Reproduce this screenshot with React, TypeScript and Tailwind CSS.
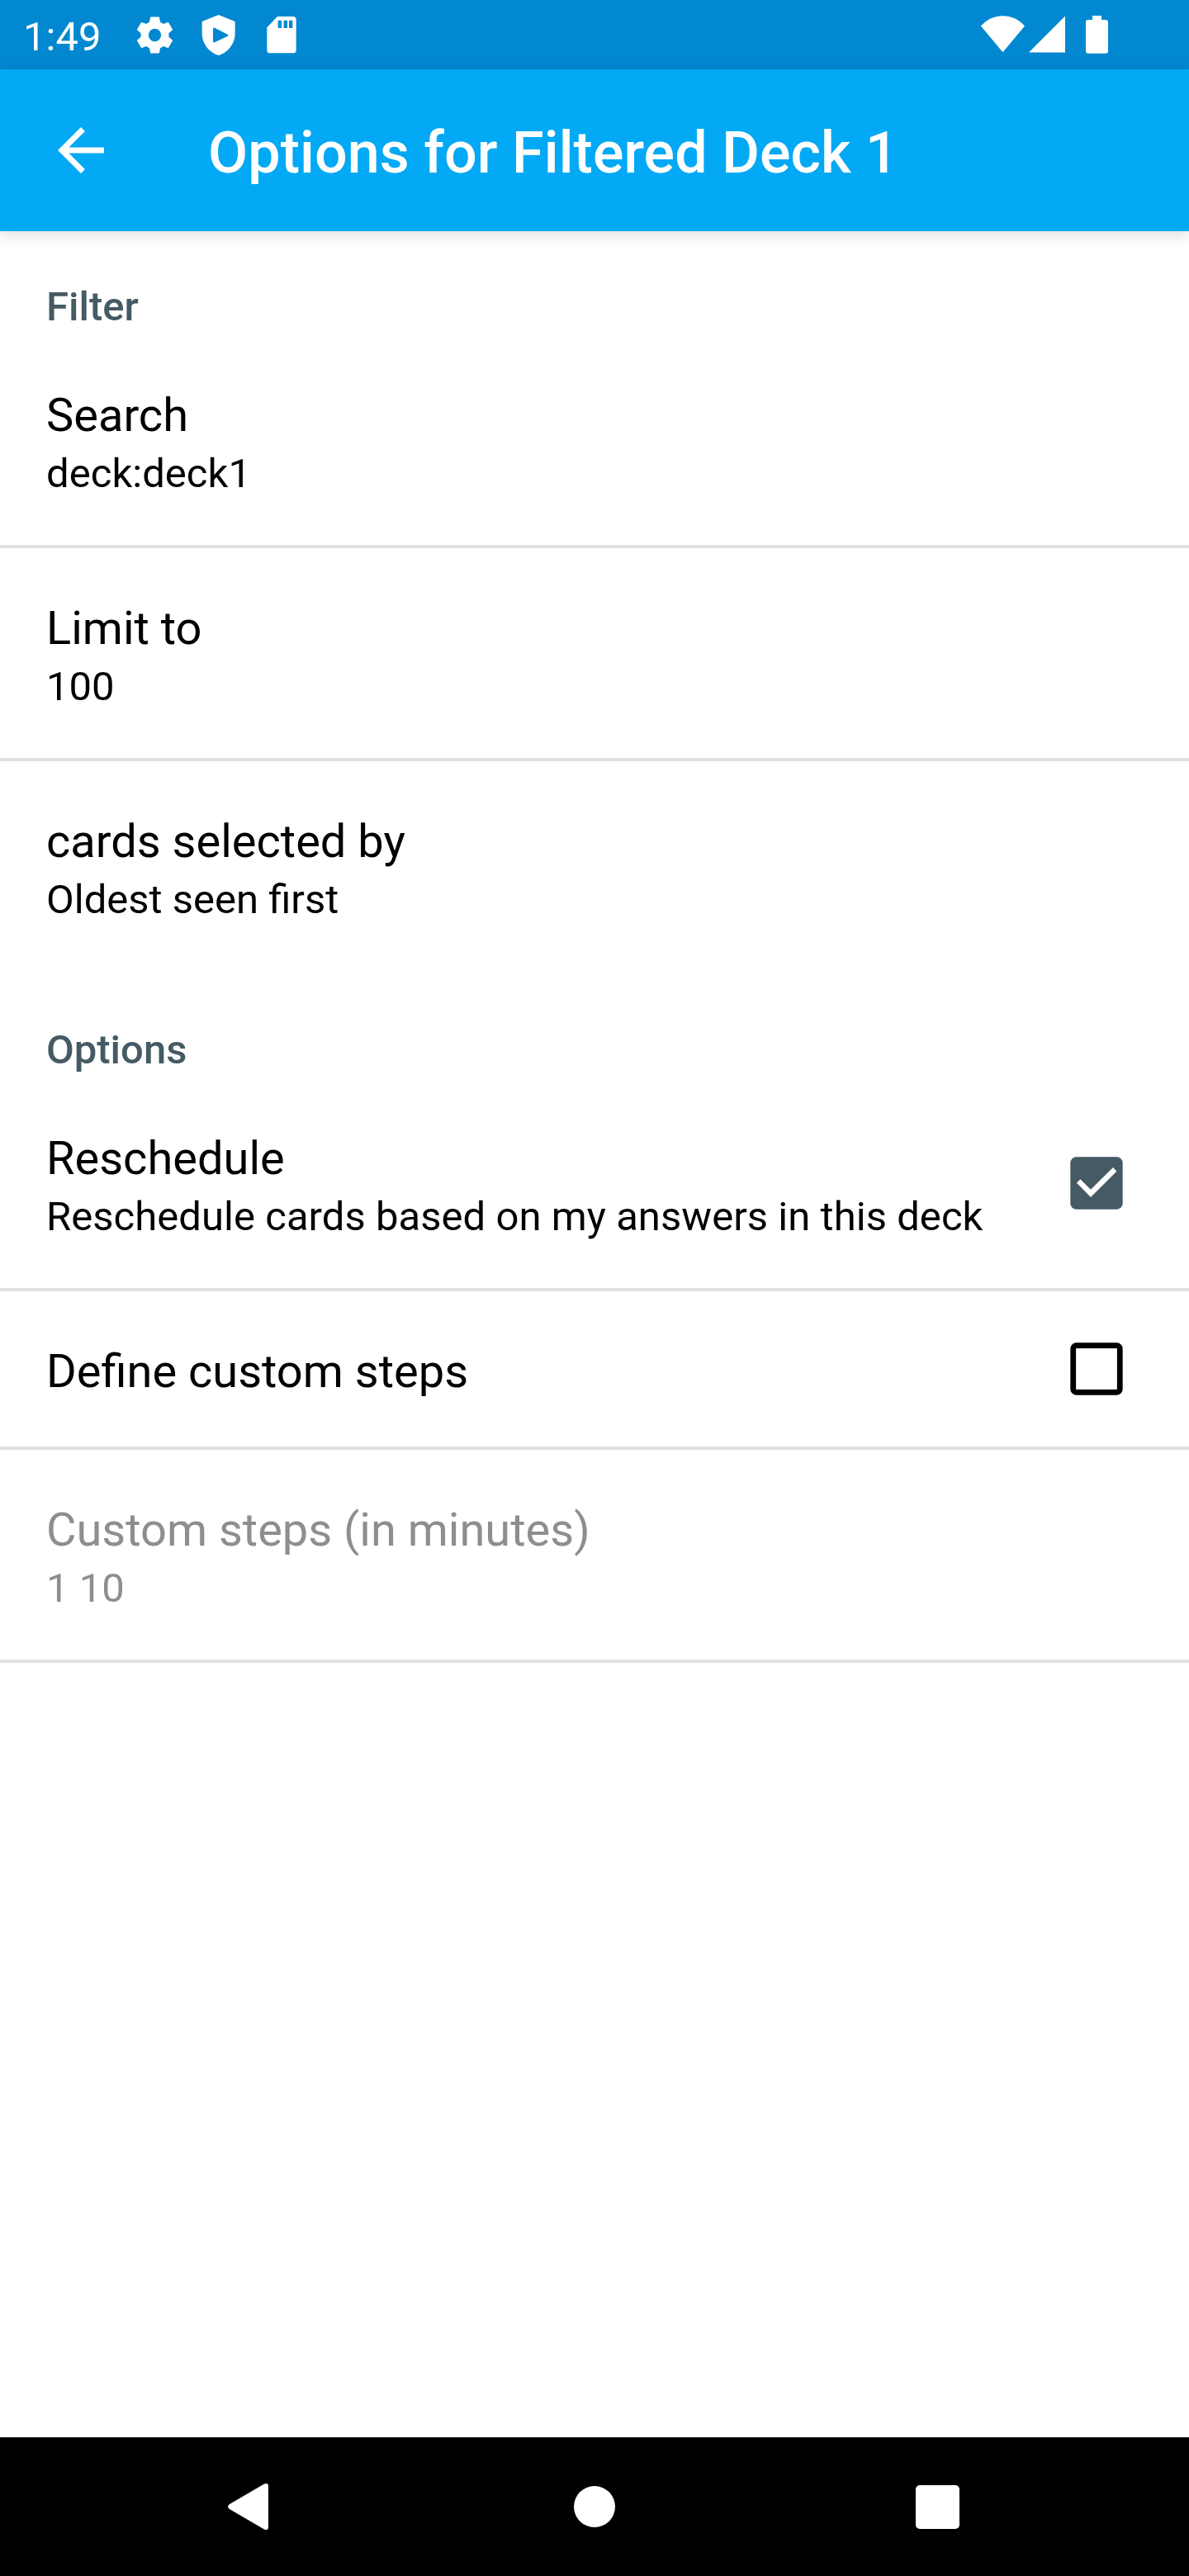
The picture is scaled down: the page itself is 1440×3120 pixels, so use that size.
import React from "react";

function Row({ title, summary, last, disabled, children, short, tracked }: { title: string; summary?: string; last?: boolean; disabled?: boolean; short?: boolean; tracked?: boolean; children?: React.ReactNode }) {
  return (
    <div className={`flex items-center justify-between pl-[56px] pr-[80px] ${short ? "h-[192px]" : last ? "h-[254px]" : "h-[258px]"} ${last ? "" : "border-b-4 border-[#e0e0e0]"}`}>
      <div className={`${disabled ? "text-[#8e8e8e]" : "text-black"} ${short ? "pt-[6px]" : "pt-[5px]"}`}>
        <div className="text-[56px] leading-[76px]">{title}</div>
        {summary && <div className={`text-[49px] leading-[65px] ${tracked ? "tracking-[0.04px]" : ""}`}>{summary}</div>}
      </div>
      {children}
    </div>
  );
}

function Category({ children }: { children: React.ReactNode }) {
  return <h2 className="pl-[56px] text-[49px] font-medium leading-[59px] text-[#455a64]">{children}</h2>;
}

const teeth = [0, 60, 120, 180, 240, 300];

export default function App() {
  return (
    <div className="flex h-[3120px] w-[1440px] flex-col bg-white font-['Roboto',sans-serif]">
      <div className="flex h-[84px] shrink-0 items-center bg-[#0288d1] pl-[28px] text-white">
        <span className="w-[133px] pt-[4px] text-[49px] leading-[59px]">1:49</span>
        <svg className="h-[53px] w-[53px]" viewBox="-79.5 -79.500 159 159" fill="currentColor">
          <circle r="37" fill="none" stroke="currentColor" strokeWidth="28" />
          {teeth.map((a) => (
            <path key={a} transform={`rotate(${a})`} d="M-20-45-16.500-64Q-16-66-14-66H14Q16-66 16.500-64L20-45 16-38H-16z" />
          ))}
        </svg>
        <svg className="ml-[30px] h-[49px] w-[41px]" viewBox="26 23 123 147" fill="currentColor">
          <path fillRule="evenodd" d="M88 23 146 46.500Q148 47.500 148 50V92C148 128 120 162 88 170 56 162 28 128 28 92V50Q28 47.500 30 46.500zM68 73V120Q69 125 74 123L121 100Q125 97 121 94L74 70Q69 68 68 73z" />
        </svg>
        <svg className="ml-[38px] h-[45px] w-[36px]" viewBox="265 30 108 135" fill="currentColor">
          <path fillRule="evenodd" d="M304 30H361Q372 30 372 42V152Q372 163 361 163H277Q266 163 266 152V70zM306 44V72H319V44zM327 44V72H340V44zM346 44V72H359V44z" />
        </svg>
        <svg className="ml-[829px] h-[46px] w-[53px]" viewBox="0 0 53 46" fill="currentColor">
          <path d="M26.500 44.300 0 12.500C14-4 39-4 53 12.500z" />
        </svg>
        <svg className="ml-[5px] h-[46px] w-[44px]" viewBox="0 0 44 46" fill="currentColor">
          <path d="M0 44.500 44 .5V44.500z" />
        </svg>
        <svg className="ml-[25px] h-[46px] w-[27px]" viewBox="0 0 27 46" fill="currentColor">
          <path d="M8 0h11v5h5q3 0 3 3v35q0 2.700-3 2.700H3q-3 0-3-2.700V8q0-3 3-3h5z" />
        </svg>
      </div>
      <header className="z-10 flex h-[196px] shrink-0 items-center bg-[#03a9f4] pl-[56px] text-white shadow-[0_4px_18px_rgba(0,0,0,0.15)]">
        <svg className="h-[84px] w-[84px]" viewBox="0 0 24 24" fill="currentColor">
          <path d="M20 11H7.830l5.590-5.590L12 4l-8 8 8 8 1.410-1.410L7.830 13H20v-2z" />
        </svg>
        <h1 className="ml-[112px] pt-[6px] text-[70px] font-medium leading-[82px] tracking-[0.06px]">Options for Filtered Deck 1</h1>
      </header>
      <main className="flex-1 pt-[62px]">
        <Category>Filter</Category>
        <div className="mt-[5px]">
          <Row title="Search" summary="deck:deck1" tracked />
          <Row title="Limit to" summary="100" />
          <Row title="cards selected by" summary="Oldest seen first" last />
        </div>
        <div className="mt-[66px]">
          <Category>Options</Category>
        </div>
        <div className="mt-[5px]">
          <Row title="Reschedule" summary="Reschedule cards based on my answers in this deck" tracked>
            <svg className="h-[64px] w-[64px]" viewBox="30 33 192 192">
              <rect x="31" y="34" width="190" height="190" rx="21" fill="#455a64" />
              <path d="M54 128 67 115 105 152 186 72 199 86 105 180z" fill="white" />
            </svg>
          </Row>
          <Row title="Define custom steps" short>
            <svg className="h-[64px] w-[64px]" viewBox="30 33 192 192">
              <rect x="41.500" y="44.500" width="169" height="169" rx="10.500" fill="none" stroke="black" strokeWidth="21" />
              <rect x="52" y="55" width="148" height="148" fill="white" />
            </svg>
          </Row>
          <Row title="Custom steps (in minutes)" summary="1 10" disabled />
        </div>
      </main>
      <nav className="flex h-[168px] shrink-0 items-center bg-black pl-[276px] text-white">
        <svg className="h-[56px] w-[49px]" viewBox="0 0 49 56" fill="currentColor">
          <path d="M44 .6Q49-1.500 49 3.500V52.500Q49 57.500 44 55.400L2 31Q-2 28 2 25z" />
        </svg>
        <div className="ml-[370px] size-[50px] rounded-full bg-white" />
        <div className="ml-[364px] size-[53px] rounded-[5px] bg-white" />
      </nav>
    </div>
  );
}
